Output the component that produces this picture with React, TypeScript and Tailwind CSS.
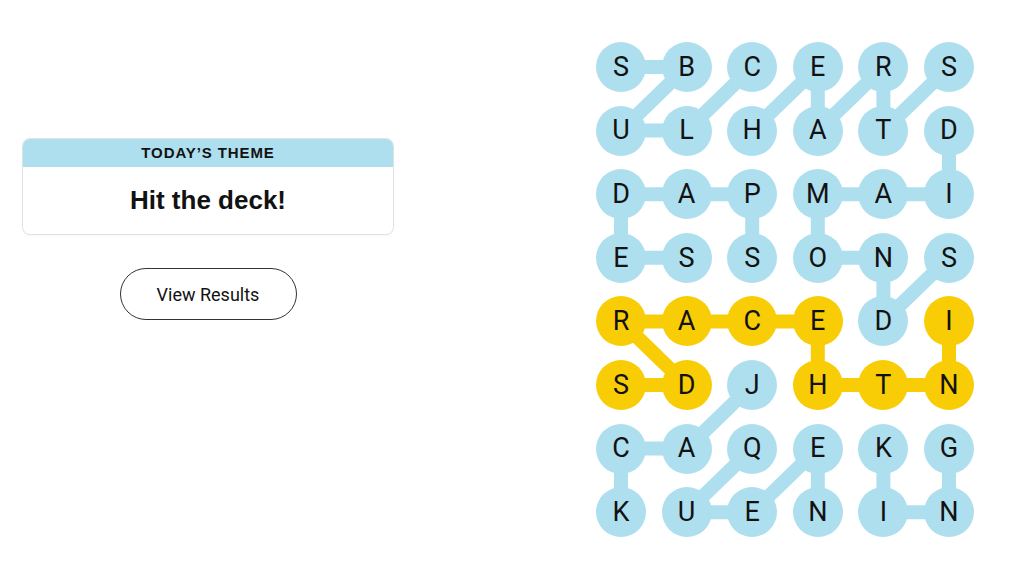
const letters = [
  "SBCERS",
  "ULHATD",
  "DAPMAI",
  "ESSONS",
  "RACEDI",
  "SDJHTN",
  "CAQEKG",
  "KUENIN",
];

// [row, col] paths for each found word
const blueWords: [number, number][][] = [
  [[0, 2], [1, 1], [1, 0], [0, 1], [0, 0]], // CLUBS
  [[1, 2], [0, 3], [1, 3], [0, 4], [1, 4], [0, 5]], // HEARTS
  [[1, 5], [2, 5], [2, 4], [2, 3], [3, 3], [3, 4], [4, 4], [3, 5]], // DIAMONDS
  [[3, 2], [2, 2], [2, 1], [2, 0], [3, 0], [3, 1]], // SPADES
  [[5, 2], [6, 1], [6, 0], [7, 0]], // JACK
  [[6, 2], [7, 1], [7, 2], [6, 3], [7, 3]], // QUEEN
  [[6, 4], [7, 4], [7, 5], [6, 5]], // KING
];

const spangram: [number, number][] = [
  [4, 5], [5, 5], [5, 4], [5, 3], [4, 3], [4, 2], [4, 1], [4, 0], [5, 1], [5, 0],
];

const BLUE = "#aedfee";
const YELLOW = "#f8cd05";
const DX = 65.6;
const DY = 63.6;

const isYellow = (r: number, c: number) =>
  spangram.some(([sr, sc]) => sr === r && sc === c);

const toPoints = (path: [number, number][]) =>
  path.map(([r, c]) => `${25 + c * DX},${25 + r * DY}`).join(" ");

const Board = () => (
  <div className="relative">
    <svg className="absolute inset-0" width={378} height={495}>
      {blueWords.map((w, i) => (
        <polyline
          key={i}
          points={toPoints(w)}
          fill="none"
          stroke={BLUE}
          strokeWidth={14}
          strokeLinejoin="round"
          strokeLinecap="round"
        />
      ))}
      <polyline
        points={toPoints(spangram)}
        fill="none"
        stroke={YELLOW}
        strokeWidth={14}
        strokeLinejoin="round"
        strokeLinecap="round"
      />
    </svg>
    <div className="relative grid grid-cols-[repeat(6,50px)] gap-x-[15.6px] gap-y-[13.6px]">
      {letters.map((row, r) =>
        row.split("").map((ch, c) => (
          <div
            key={`${r}-${c}`}
            className={`w-[50px] h-[50px] rounded-full flex items-center justify-center text-[27px] text-[#121212] ${
              isYellow(r, c) ? "bg-[#f8cd05]" : "bg-[#aedfee]"
            }`}
          >
            {ch}
          </div>
        ))
      )}
    </div>
  </div>
);

export default function App() {
  return (
    <div
      className="w-[1024px] h-[576px] bg-white flex overflow-hidden"
      style={{ fontFamily: "Roboto, 'Liberation Sans', sans-serif" }}
    >
      {/* Theme + results */}
      <div className="w-[394px] pl-[22px] pt-[138px] flex flex-col items-center">
        <div className="w-full rounded-lg border border-[#e2e2e2] overflow-hidden bg-white shadow-[0_1px_2px_rgba(0,0,0,0.04)]">
          <div className="h-[28px] bg-[#aedfee] flex items-center justify-center text-[15px] font-semibold tracking-[0.9px] text-[#121212] font-['Liberation_Sans',sans-serif]">
            TODAY’S THEME
          </div>
          <div className="h-[67px] flex items-center justify-center text-[26px] font-bold text-[#121212] font-['Liberation_Sans',sans-serif]">
            Hit the deck!
          </div>
        </div>
        <button className="mt-[33px] w-[177px] h-[52px] rounded-full border border-[#333] bg-white text-[18px] text-[#121212]">
          View Results
        </button>
      </div>

      {/* Board */}
      <div className="ml-[202px] pt-[42px]">
        <Board />
      </div>
    </div>
  );
}
